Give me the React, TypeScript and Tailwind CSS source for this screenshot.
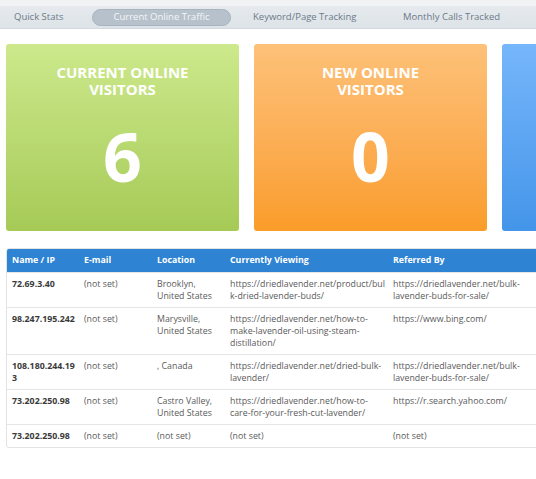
import React from "react";

const ROWS = [
  {
    ip: "72.69.3.40",
    email: "(not set)",
    location: "Brooklyn, United States",
    viewing: "https://driedlavender.net/product/bulk-dried-lavender-buds/",
    referred: "https://driedlavender.net/bulk-lavender-buds-for-sale/",
  },
  {
    ip: "98.247.195.242",
    email: "(not set)",
    location: "Marysville, United States",
    viewing: "https://driedlavender.net/how-to-make-lavender-oil-using-steam-distillation/",
    referred: "https://www.bing.com/",
  },
  {
    ip: "108.180.244.193",
    email: "(not set)",
    location: ", Canada",
    viewing: "https://driedlavender.net/dried-bulk-lavender/",
    referred: "https://driedlavender.net/bulk-lavender-buds-for-sale/",
  },
  {
    ip: "73.202.250.98",
    email: "(not set)",
    location: "Castro Valley, United States",
    viewing: "https://driedlavender.net/how-to-care-for-your-fresh-cut-lavender/",
    referred: "https://r.search.yahoo.com/",
  },
  {
    ip: "73.202.250.98",
    email: "(not set)",
    location: "(not set)",
    viewing: "(not set)",
    referred: "(not set)",
  },
];

const App = () => {
  return (
    <div
      className="w-[536px] h-[479px] overflow-hidden bg-white"
      style={{ fontFamily: '"Open Sans", "Noto Sans", sans-serif' }}
    >
      {/* ── Tab bar ── */}
      <div className="h-[6px] bg-[#f0f2f4]" />
      <div className="h-[23px] flex items-center bg-gradient-to-b from-[#e6eaee] to-[#dde3e8] border-b border-[#d3d9df] text-[9.5px] text-[#6c7a87] whitespace-nowrap">
        <div className="pl-[14px] w-[92px]">Quick Stats</div>
        <div className="h-[17px] w-[139px] flex items-center justify-center rounded-full bg-[#b6c1cb] border border-[#a7b3be] text-[#f4f6f8]">
          Current Online Traffic
        </div>
        <div className="pl-[22px] w-[172px]">Keyword/Page Tracking</div>
        <div>Monthly Calls Tracked</div>
      </div>

      {/* ── Stat cards ── */}
      <div className="flex gap-[15px] pl-[6px] pt-[15px]">
        <div className="shrink-0 w-[233px] h-[187px] rounded-[3px] bg-gradient-to-b from-[#cde98c] to-[#a6ca56] flex flex-col items-center text-white pt-[20px]">
          <div className="text-[15px] font-bold leading-[17px] text-center">
            CURRENT ONLINE
            <br />
            VISITORS
          </div>
          <div className="text-[68px] font-bold leading-none mt-[24px]">6</div>
        </div>
        <div className="shrink-0 w-[233px] h-[187px] rounded-[3px] bg-gradient-to-b from-[#fdc178] to-[#fa9c28] flex flex-col items-center text-white pt-[20px]">
          <div className="text-[15px] font-bold leading-[17px] text-center">
            NEW ONLINE
            <br />
            VISITORS
          </div>
          <div className="text-[68px] font-bold leading-none mt-[24px]">0</div>
        </div>
        <div className="shrink-0 w-[233px] h-[187px] rounded-[3px] bg-gradient-to-b from-[#76b6fb] to-[#4395e9]" />
      </div>

      {/* ── Visitors table ── */}
      <div className="pl-[6px] pt-[17px]">
        <div className="w-[700px] rounded-[3px] border border-[#e3e3e3] overflow-hidden">
          <table className="table-fixed w-full border-collapse text-[8.8px] leading-[12px]">
            <colgroup>
              <col className="w-[72px]" />
              <col className="w-[73px]" />
              <col className="w-[73px]" />
              <col className="w-[163px]" />
              <col className="w-[163px]" />
              <col />
            </colgroup>
            <thead>
              <tr className="bg-[#2e83d3] text-white h-[23px]">
                <th className="text-left font-bold px-[5px]">Name / IP</th>
                <th className="text-left font-bold px-[5px]">E-mail</th>
                <th className="text-left font-bold px-[5px]">Location</th>
                <th className="text-left font-bold px-[5px]">Currently Viewing</th>
                <th className="text-left font-bold px-[5px]">Referred By</th>
                <th />
              </tr>
            </thead>
            <tbody className="text-[#5a5a5a]">
              {ROWS.map((row, i) => (
                <tr key={i} className="border-t border-[#e6e6e6] align-top">
                  <td className="pl-[5px] pr-[3px] py-[5px] font-bold text-[#3a3a3a] [overflow-wrap:anywhere]">{row.ip}</td>
                  <td className="pl-[5px] pr-[3px] py-[5px]">{row.email}</td>
                  <td className="pl-[5px] pr-[3px] py-[5px]">{row.location}</td>
                  <td className="pl-[5px] pr-[3px] py-[5px] [overflow-wrap:anywhere]">{row.viewing}</td>
                  <td className="pl-[5px] pr-[3px] py-[5px] [overflow-wrap:anywhere]">{row.referred}</td>
                  <td />
                </tr>
              ))}
            </tbody>
          </table>
        </div>
      </div>
    </div>
  );
};

export default App;
